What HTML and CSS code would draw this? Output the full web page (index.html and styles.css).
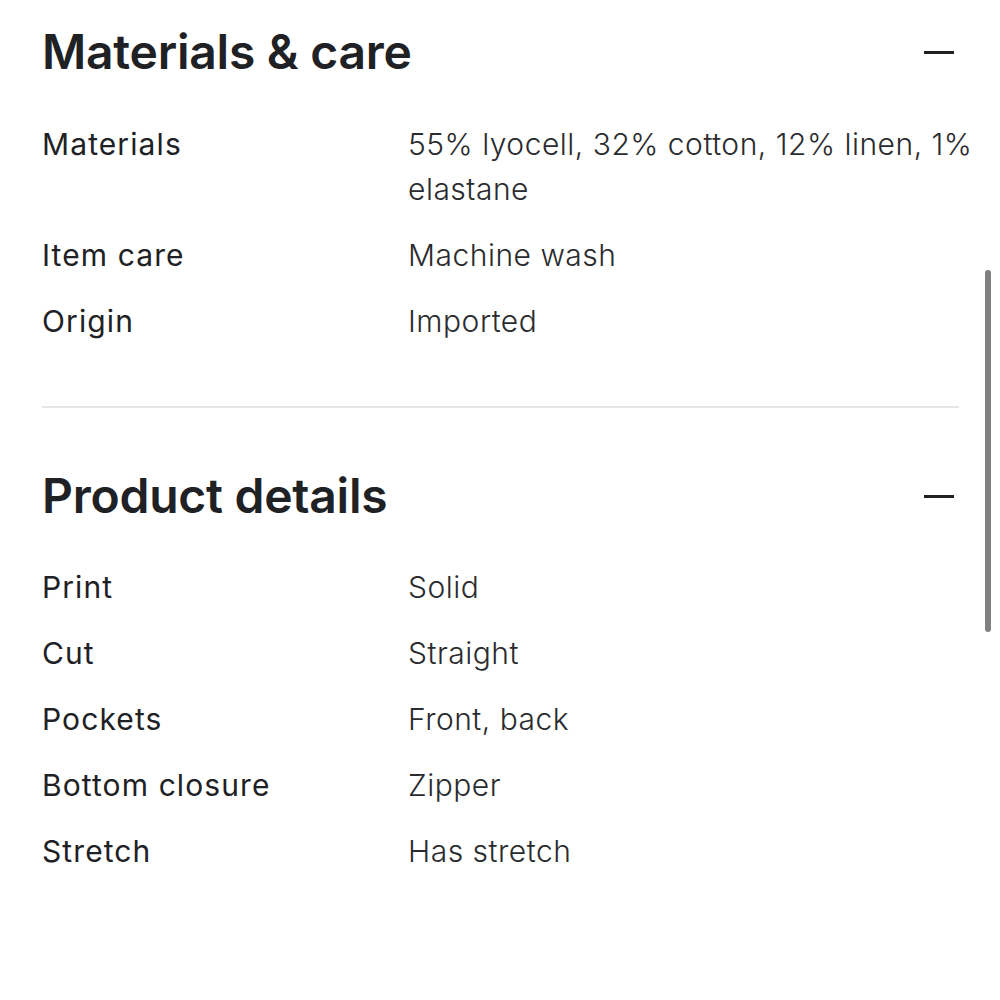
FILE: index.html
```html
<!DOCTYPE html>
<html>
<head>
<meta charset="utf-8">
<link rel="stylesheet" href="styles.css">
</head>
<body>
<main class="page">
  <section class="section">
    <div class="section-head">
      <h2 class="title">Materials &amp; care</h2>
      <span class="minus"></span>
    </div>
    <dl class="specs">
      <dt>Materials</dt><dd>55% lyocell, 32% cotton, 12% linen, 1% elastane</dd>
      <dt>Item care</dt><dd>Machine wash</dd>
      <dt>Origin</dt><dd>Imported</dd>
    </dl>
  </section>
  <hr class="divider">
  <section class="section">
    <div class="section-head">
      <h2 class="title">Product details</h2>
      <span class="minus"></span>
    </div>
    <dl class="specs">
      <dt>Print</dt><dd>Solid</dd>
      <dt>Cut</dt><dd>Straight</dd>
      <dt>Pockets</dt><dd>Front, back</dd>
      <dt>Bottom closure</dt><dd>Zipper</dd>
      <dt>Stretch</dt><dd>Has stretch</dd>
    </dl>
  </section>
</main>
<div class="scrollbar"></div>
</body>
</html>
```
FILE: styles.css
```css
html, body {
  margin: 0;
  padding: 0;
  background: #ffffff;
}
body {
  font-family: Inter, "Noto Sans", sans-serif;
  color: #202124;
}
.page {
  padding: 22px 41px 0 42px;
}
.section-head {
  display: flex;
  align-items: center;
  justify-content: space-between;
  height: 60px;
}
.title {
  margin: 0;
  font-size: 48px;
  font-weight: 600;
  letter-spacing: -0.25px;
  line-height: 60px;
}
.minus {
  display: block;
  width: 30px;
  height: 3px;
  background: #202124;
  margin-right: 5px;
}
.specs {
  display: grid;
  grid-template-columns: 366px 1fr;
  row-gap: 21px;
  margin: 40px 0 0 0;
  font-size: 30px;
  line-height: 45px;
}
.specs dt {
  font-weight: 400;
  letter-spacing: 1.1px;
}
.specs dd {
  margin: 0 -24px 0 0;
  font-weight: 300;
  letter-spacing: 0.5px;
  color: #2a2b2e;
}
.divider {
  border: 0;
  height: 2px;
  background: #e6e6e6;
  margin: 62px 0 58px 0;
}
.section + .divider + .section .specs {
  margin-top: 39px;
}
.scrollbar {
  position: fixed;
  left: 985px;
  top: 270px;
  width: 6px;
  height: 362px;
  border-radius: 3px;
  background: #808080;
}
```
